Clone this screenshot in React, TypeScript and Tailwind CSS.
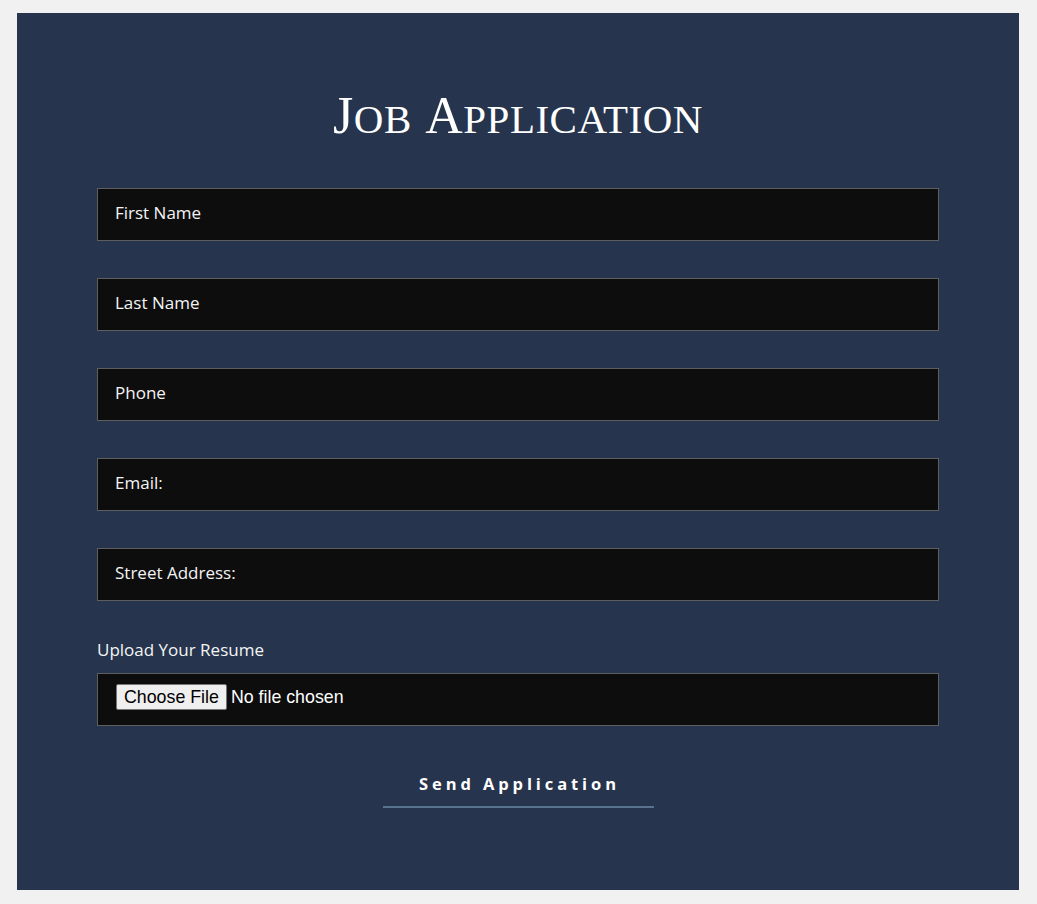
import React from "react";

const fields = ["First Name", "Last Name", "Phone", "Email:", "Street Address:"];

export default function App() {
  return (
    <div className="min-h-screen bg-[#f1f1f1] pt-[13px] pl-[17px] pr-[18px]" style={{ height: 904 }}>
      <div className="h-[877px] bg-[#26344d] px-[80px] pt-[78px] flex flex-col" style={{ fontFamily: '"Open Sans", "Noto Sans", sans-serif' }}>
        <h1
          className="h-[50px] flex items-baseline justify-center text-white leading-[50px] tracking-[0.5px]"
          style={{ fontFamily: '"Liberation Serif", "DejaVu Serif", serif' }}
        >
          <span className="text-[52px]">J</span>
          <span className="text-[41px]">OB</span>
          <span className="text-[52px]">&nbsp;A</span>
          <span className="text-[41px]">PPLICATION</span>
        </h1>
        <div className="mt-[47px] flex flex-col gap-[37px]">
          {fields.map((f) => (
            <input
              key={f}
              type="text"
              placeholder={f}
              className="h-[53px] w-full bg-[#0d0d0d] border border-[#5e5e5e] px-[17px] pb-[5px] text-[17px] text-white placeholder:text-[#f4f4f4] outline-none"
            />
          ))}
        </div>
        <label className="mt-[37px] h-[24px] leading-[24px] text-[17px] text-[#f4f4f4]">Upload Your Resume</label>
        <div className="mt-[11px] h-[53px] bg-[#0d0d0d] border border-[#5e5e5e] flex items-center pl-[18px] pb-[4px]">
          <input
            type="file"
            className="text-[17.8px] text-white file:mr-[4px] file:bg-[#efefef] file:text-black file:border file:border-[#767676] file:px-[7px] file:py-[1px] file:rounded-[2px] file:leading-[22px]"
            style={{ fontFamily: '"Liberation Sans", Arial, sans-serif' }}
          />
        </div>
        <div className="mt-[46px] flex justify-center">
          <button className="w-[271px] h-[36px] border-b-2 border-[#57738f] text-white font-bold text-[16.5px] tracking-[3.9px] leading-[24px] pb-[12px] pl-[3px]">
            Send Application
          </button>
        </div>
      </div>
    </div>
  );
}
